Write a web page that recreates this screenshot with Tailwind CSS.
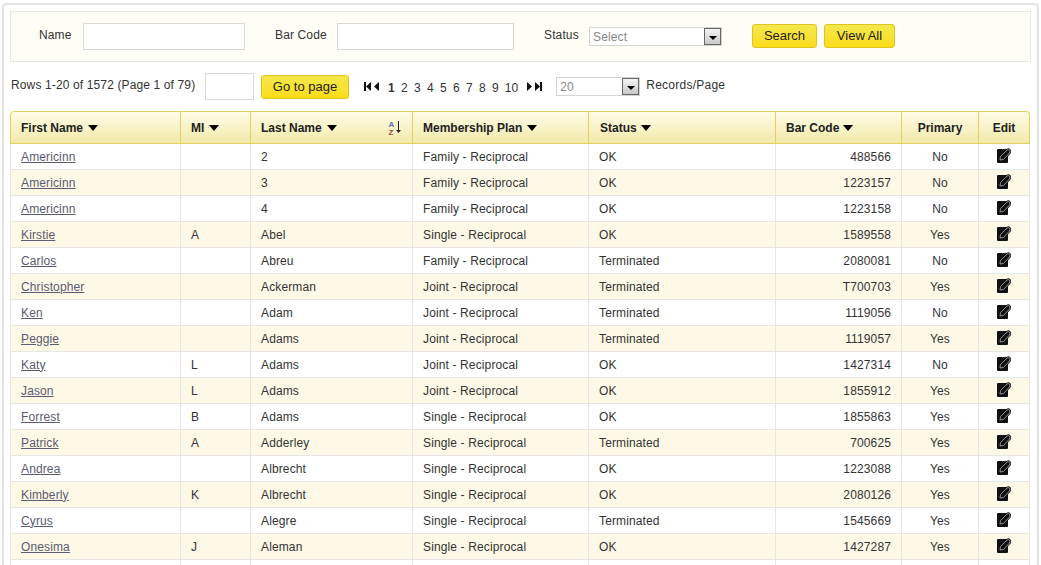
<!DOCTYPE html>
<html lang="en">
<head>
  <meta charset="UTF-8" />
  <title>Members</title>
  <script src="https://cdn.jsdelivr.net/npm/@tailwindcss/browser@4"></script>
</head>
<body class="h-[565px] overflow-hidden bg-white text-[12px] tracking-[0.13px] text-[#333] font-['Liberation_Sans',Arial,sans-serif]">

  <div class="ml-[2px] mt-[3px] w-[1037px] h-[600px] border-2 border-[#e4e4e4] rounded-[4px] pl-[6px] pt-[6px]">

    <!-- Search filter -->
    <div class="w-[1021px] h-[51px] border border-[#e8e8e0] bg-[#fffef6] flex items-start pl-[28px] pt-[11px]">
      <span class="mt-[3px] w-[44px]">Name</span>
      <input type="text" class="w-[162px] h-[27px] bg-white border border-[#d8d8d8]" />
      <span class="mt-[3px] ml-[30px] w-[62px]">Bar Code</span>
      <input type="text" class="w-[177px] h-[27px] bg-white border border-[#d8d8d8]" />
      <span class="mt-[3px] ml-[30px] w-[45px]">Status</span>
      <div class="mt-[4px] w-[133px] h-[19px] bg-white border border-[#d4d4d4] flex justify-between items-center">
        <span class="pl-[3px] text-[#888]">Select</span>
        <span class="w-[17px] h-[17px] border border-[#666] bg-gradient-to-b from-[#f4f4f4] to-[#c8c8c8] flex items-center justify-center">
          <span class="w-0 h-0 mt-[2px] border-x-[4px] border-x-transparent border-t-[4px] border-t-black"></span>
        </span>
      </div>
      <button class="ml-[30px] mt-[1px] w-[65px] h-[24px] rounded-[3px] border border-[#e0c420] bg-gradient-to-b from-[#f3e84a] to-[#fbdc14] text-[13px] tracking-normal text-[#222]">Search</button>
      <button class="ml-[7px] mt-[1px] w-[71px] h-[24px] rounded-[3px] border border-[#e0c420] bg-gradient-to-b from-[#f3e84a] to-[#fbdc14] text-[13px] tracking-normal text-[#222]">View All</button>
    </div>

    <!-- Pager -->
    <div class="h-[49px] flex items-center pl-[1px]">
      <span class="w-[194px] mb-[4px]">Rows 1-20 of 1572 (Page 1 of 79)</span>
      <input type="text" class="w-[49px] h-[27px] bg-white border border-[#d8d8d8]" />
      <button class="ml-[7px] w-[88px] h-[24px] rounded-[3px] border border-[#e0c420] bg-gradient-to-b from-[#f3e84a] to-[#fbdc14] text-[13px] tracking-normal text-[#222]">Go to page</button>
      <svg class="ml-[15px]" width="15" height="9" viewBox="0 0 15 9"><path d="M0 0h2v9H0zM7 0v9L2 4.500zM15 0v9L10 4.500z" fill="#111"/></svg>
      <div class="ml-[9px] flex gap-[6.3px] mt-[2px] tracking-normal">
        <b>1</b><span>2</span><span>3</span><span>4</span><span>5</span><span>6</span><span>7</span><span>8</span><span>9</span><span>10</span>
      </div>
      <svg class="ml-[9px]" width="15" height="9" viewBox="0 0 15 9"><path d="M0 0v9l5-4.500zM8 0v9l5-4.500zM13 0h2v9h-2z" fill="#111"/></svg>
      <div class="ml-[14px] w-[84px] h-[19px] bg-white border border-[#d4d4d4] flex justify-between items-center">
        <span class="pl-[3px] text-[#888]">20</span>
        <span class="w-[17px] h-[17px] border border-[#666] bg-gradient-to-b from-[#f4f4f4] to-[#c8c8c8] flex items-center justify-center">
          <span class="w-0 h-0 mt-[2px] border-x-[4px] border-x-transparent border-t-[4px] border-t-black"></span>
        </span>
      </div>
      <span class="ml-[6px] mb-[4px] tracking-[0.25px]">Records/Page</span>
    </div>

    <!-- Members table -->
    <table class="w-[1020px] table-fixed border-separate border-spacing-0">
      <colgroup>
        <col class="w-[171px]" /><col class="w-[70px]" /><col class="w-[162px]" /><col class="w-[176px]" />
        <col class="w-[187px]" /><col class="w-[126px]" /><col class="w-[77px]" /><col class="w-[51px]" />
      </colgroup>
      <thead>
        <tr class="h-[33px] bg-gradient-to-b from-[#fffdea] to-[#f2e8a6] text-[#222] tracking-normal">
          <th class="text-left font-bold pl-[10px] border-y border-x border-[#e3cf62] rounded-tl-[4px]"><span class="inline-flex items-center gap-[5px]">First Name <i class="w-0 h-0 border-x-[5.5px] border-x-transparent border-t-[6px] border-t-black"></i></span></th>
          <th class="text-left font-bold pl-[10px] border-y border-r border-[#e3cf62]"><span class="inline-flex items-center gap-[5px]">MI <i class="w-0 h-0 border-x-[5.5px] border-x-transparent border-t-[6px] border-t-black"></i></span></th>
          <th class="text-left font-bold pl-[10px] border-y border-r border-[#e3cf62]">
            <div class="flex items-center justify-between pr-[9px]">
              <span class="inline-flex items-center gap-[5px]">Last Name <i class="w-0 h-0 border-x-[5.5px] border-x-transparent border-t-[6px] border-t-black"></i></span>
              <svg width="15" height="15" viewBox="0 0 15 15">
                <text x="0.500" y="6.500" font-size="8" font-weight="700" fill="#5670b8" font-family="Liberation Sans">A</text>
                <text x="0.500" y="14.500" font-size="8" font-weight="700" fill="#a84848" font-family="Liberation Sans">Z</text>
                <path d="M10.500 1v10" stroke="#222" stroke-width="1"/><path d="M8 10h5l-2.500 3z" fill="#222"/>
              </svg>
            </div>
          </th>
          <th class="text-left font-bold pl-[10px] border-y border-r border-[#e3cf62]"><span class="inline-flex items-center gap-[5px]">Membership Plan <i class="w-0 h-0 border-x-[5.5px] border-x-transparent border-t-[6px] border-t-black"></i></span></th>
          <th class="text-left font-bold pl-[11px] border-y border-r border-[#e3cf62]"><span class="inline-flex items-center gap-[4px]">Status <i class="w-0 h-0 border-x-[5.5px] border-x-transparent border-t-[6px] border-t-black"></i></span></th>
          <th class="text-left font-bold pl-[10px] border-y border-r border-[#e3cf62]"><span class="inline-flex items-center gap-[4px]">Bar Code <i class="w-0 h-0 border-x-[5.5px] border-x-transparent border-t-[6px] border-t-black"></i></span></th>
          <th class="text-center font-bold border-y border-r border-[#e3cf62]">Primary</th>
          <th class="text-center font-bold border-y border-r border-[#e3cf62] rounded-tr-[4px]">Edit</th>
        </tr>
      </thead>
      <tbody id="rows"></tbody>
    </table>
  </div>

  <script>
    const members = [
      ["Americinn", "", "2", "Family - Reciprocal", "OK", "488566", "No"],
      ["Americinn", "", "3", "Family - Reciprocal", "OK", "1223157", "No"],
      ["Americinn", "", "4", "Family - Reciprocal", "OK", "1223158", "No"],
      ["Kirstie", "A", "Abel", "Single - Reciprocal", "OK", "1589558", "Yes"],
      ["Carlos", "", "Abreu", "Family - Reciprocal", "Terminated", "2080081", "No"],
      ["Christopher", "", "Ackerman", "Joint - Reciprocal", "Terminated", "T700703", "Yes"],
      ["Ken", "", "Adam", "Joint - Reciprocal", "Terminated", "1119056", "No"],
      ["Peggie", "", "Adams", "Joint - Reciprocal", "Terminated", "1119057", "Yes"],
      ["Katy", "L", "Adams", "Joint - Reciprocal", "OK", "1427314", "No"],
      ["Jason", "L", "Adams", "Joint - Reciprocal", "OK", "1855912", "Yes"],
      ["Forrest", "B", "Adams", "Single - Reciprocal", "OK", "1855863", "Yes"],
      ["Patrick", "A", "Adderley", "Single - Reciprocal", "Terminated", "700625", "Yes"],
      ["Andrea", "", "Albrecht", "Single - Reciprocal", "OK", "1223088", "Yes"],
      ["Kimberly", "K", "Albrecht", "Single - Reciprocal", "OK", "2080126", "Yes"],
      ["Cyrus", "", "Alegre", "Single - Reciprocal", "Terminated", "1545669", "Yes"],
      ["Onesima", "J", "Aleman", "Single - Reciprocal", "OK", "1427287", "Yes"],
    ];
    const pen = "M3 12L3.500 8.500L10 2Q11.500 1 12.500 2T12.500 5L6.500 11.500Z";
    const editIcon = `<svg class="mx-auto mb-[2px]" width="15" height="15" viewBox="0 0 15 15"><path d="M0 2q0-1 1-1h10v13q0 1-1 1H1q-1 0-1-1z" fill="#111"/><path d="${pen}" fill="#111" stroke="#111" stroke-width="2.200"/><path d="${pen}" fill="#111" stroke="#b0b0b0" stroke-width=".8"/></svg>`;
    let html = "";
    members.forEach((m, i) => {
      const bg = i % 2 ? "bg-[#fdf9e6]" : "bg-white";
      html += `<tr class="h-[26px] ${bg}">
        <td class="pl-[10px] border-b border-x border-[#e6e6e6]"><a href="#" class="underline text-[#5a5a70]">${m[0]}</a></td>
        <td class="pl-[10px] border-b border-r border-[#e6e6e6]">${m[1]}</td>
        <td class="pl-[10px] border-b border-r border-[#e6e6e6]">${m[2]}</td>
        <td class="pl-[10px] border-b border-r border-[#e6e6e6]">${m[3]}</td>
        <td class="pl-[10px] border-b border-r border-[#e6e6e6]">${m[4]}</td>
        <td class="pr-[10px] text-right border-b border-r border-[#e6e6e6]">${m[5]}</td>
        <td class="text-center border-b border-r border-[#e6e6e6]">${m[6]}</td>
        <td class="border-b border-r border-[#e6e6e6]">${editIcon}</td>
      </tr>`;
    });
    html += `<tr class="h-[26px] bg-white"><td class="border-b border-x border-[#e6e6e6]"></td><td class="border-b border-r border-[#e6e6e6]"></td><td class="border-b border-r border-[#e6e6e6]"></td><td class="border-b border-r border-[#e6e6e6]"></td><td class="border-b border-r border-[#e6e6e6]"></td><td class="border-b border-r border-[#e6e6e6]"></td><td class="border-b border-r border-[#e6e6e6]"></td><td class="border-b border-r border-[#e6e6e6]"></td></tr>`;
    document.getElementById("rows").innerHTML = html;
  </script>
</body>
</html>
